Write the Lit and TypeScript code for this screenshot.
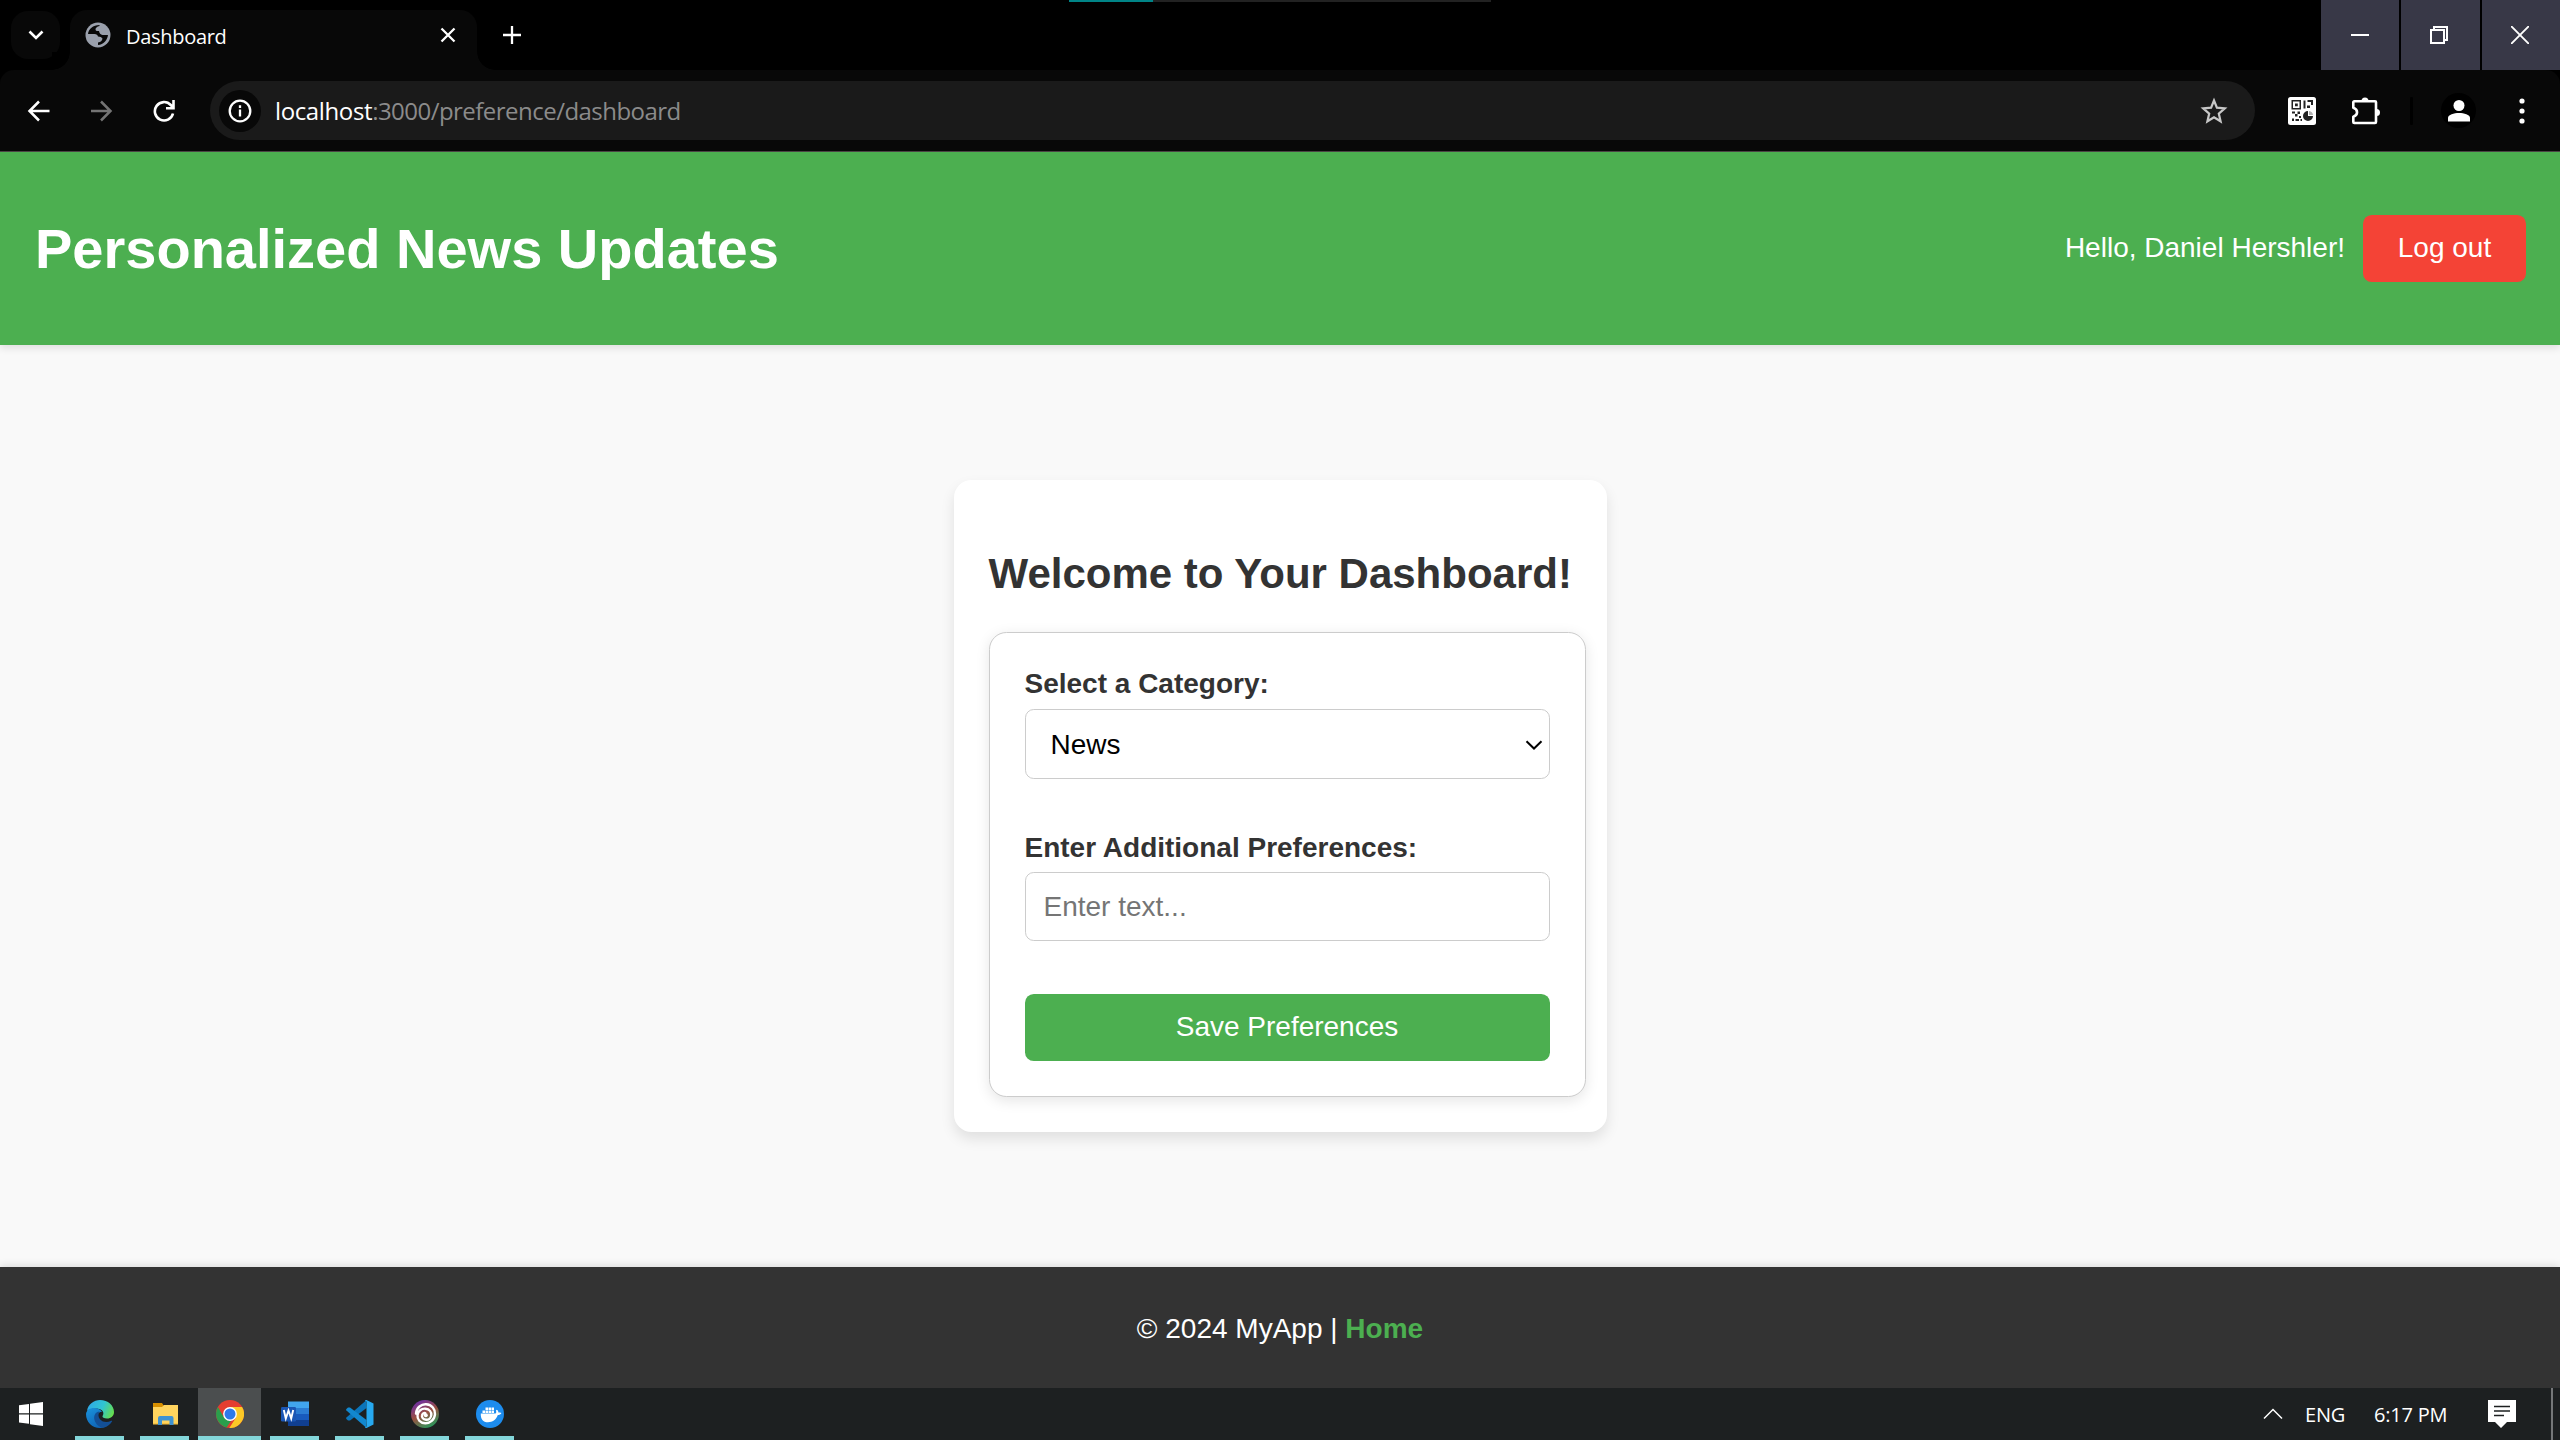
import { LitElement, html, css, svg } from "lit";
import { customElement } from "lit/decorators.js";

const edge = svg`<defs>
  <linearGradient id="e1" x1="0" y1="0.3" x2="1" y2="0.6"><stop offset="0" stop-color="#2fa8e8"/><stop offset=".55" stop-color="#30c5d2"/><stop offset="1" stop-color="#66dd4e"/></linearGradient>
  <linearGradient id="e2" x1="0" y1="0" x2="0.6" y2="1"><stop offset="0" stop-color="#1a93dc"/><stop offset="1" stop-color="#0f63b5"/></linearGradient></defs>
  <path fill="url(#e1)" d="M1 11C2 4 8 0 14 0c8 0 14 5.500 14 12 0 4-3 6.500-7 6.500-3 0-5-1-4.500-2.500C18 14 18 10 13 9 8 8 3 9 1 11z"/>
  <path fill="url(#e2)" d="M0 14C.5 10 4 8 8 8c4 0 7 2 8 4-3-.5-5 2-5 5 0 6 5 9 11 8-2 2-5 3-8 3C6 28 0 22 0 14z"/>
  <path fill="#134f96" d="M13.500 11.500C9 12 7.500 16 8.500 20c1 4 5 7.500 8.500 7.700 4-.7 7-3 9-6.200.4-.7-.2-1-.8-.7-4 2-8.500 1.500-11-1.300-2-2.300-2.300-5-.7-8z"/>`;

const folder = svg`
  <path fill="#d89000" d="M2 3h9l2 3h4v5H2z"/>
  <path fill="#ffd45e" d="M2 7h9l2-2h14v19H2z"/>
  <path fill="#f6c243" d="M2 23h25v1.500H2z"/>
  <path fill="#3f92d2" d="M7 25v-7q0-2 2-2h11.500q2 0 2 2v7h-4v-4.500H11V25z"/>`;

const chrome = svg`
  <circle cx="14" cy="14" r="14" fill="#e43d30"/>
  <path fill="#2a9e4c" d="M1.900 7 8 17.500 14 21l1 0-4.500 6.500A14 14 0 0 1 1.900 7z"/>
  <path fill="#fcc927" d="M14 7h12.100A14 14 0 0 1 13.300 28l6.800-10.500z"/>
  <circle cx="14" cy="14" r="6.900" fill="#fff"/><circle cx="14" cy="14" r="5.500" fill="#2e79ea"/>`;

const word = svg`
  <path fill="#41a5ee" d="M7 1.500h21V8H7z"/><path fill="#2b7cd3" d="M7 8h21v6H7z"/>
  <path fill="#185abd" d="M7 14h21v6H7z"/><path fill="#103f91" d="M7 20h21v6H7z"/>
  <rect x="0" y="7" width="15" height="14.500" rx="1.200" fill="#1b56b4"/>
  <path fill="none" stroke="#fff" stroke-width="1.900" d="m2.800 10 2 8.500 2.700-8 2.700 8 2-8.500"/>`;

const vscode = svg`
  <path fill="#0b75ba" d="M20 .5 20.500 8 4 20.500 2 20.500.4 19q-.6-.7 0-1.400z"/>
  <path fill="#1288cf" d="M20 27.500 20.500 20 4 7.500 2 7.500.4 9q-.6.7 0 1.400z"/>
  <path fill="#27a9f0" d="m20.500 0 7 3.500v21L20.500 28q-1 .2-1.500-.8l1.500-.7V1.500L19 .8q.5-1 1.500-.8z"/>`;

const swirl = svg`<defs><linearGradient id="u" x1=".2" y1="0" x2=".7" y2="1"><stop offset="0" stop-color="#6a2bb0"/><stop offset=".5" stop-color="#9a5040"/><stop offset="1" stop-color="#249a5c"/></linearGradient></defs>
  <circle cx="14" cy="14" r="14" fill="url(#u)"/>
  <g fill="none" stroke="#fff" stroke-linecap="round">
    <path stroke-width="2.400" d="M5 13.500C5.500 7.500 10.500 4 15 4.300c6 .4 9.300 5 9 10-.4 5.500-5 9.200-9.800 9-5-.2-8.200-4-7.700-8.300C7 11 10.500 8.300 14.500 8.700c4 .5 6 3.300 5.800 6.300-.3 3-2.500 5-5.300 4.800-2.800-.3-4.400-2.300-4-4.300.3-1.700 1.800-2.700 3.300-2.400"/>
  </g><circle cx="14.800" cy="15.300" r="2" fill="#fff"/>`;

const docker = svg`
  <circle cx="14" cy="14" r="14" fill="#1d8cee"/>
  <path fill="#fff" d="M4.800 13.500h14.500c1-.3 1.300-1.200.6-3l.9-.7c1.200.8 1.600 1.700 1.600 2.700 1 0 2.200.1 3 .6-.7 1.500-2 2-3.600 2C20 20 16.500 22.300 12 22.300c-5 0-7.500-3-7.200-8.800z"/>
  <path fill="#fff" d="M6.500 10.500H9V13H6.500zm3 0H12V13H9.500zm3 0H15V13h-2.500zm3 0H18V13h-2.500zM9.500 7.600H12v2.500H9.500zm3 0H15v2.500h-2.500zm3 0H18v2.500h-2.500z"/>`;

const apps = [
  { icon: edge, active: false },
  { icon: folder, active: false },
  { icon: chrome, active: true },
  { icon: word, active: false },
  { icon: vscode, active: false },
  { icon: swirl, active: false },
  { icon: docker, active: false },
];

@customElement("browser-chrome")
class BrowserChrome extends LitElement {
  static styles = css`
    :host { display: block; height: 152px; background: #000; color: #fff; font-family: "Open Sans", "Noto Sans", sans-serif; position: relative; }
    svg { display: block; flex: none; }
    .progress { position: absolute; left: 1069px; top: 0; width: 422px; height: 2px; background: #222; }
    .bar { width: 84px; height: 2px; background: #008487; }
    .tabs { height: 70px; display: flex; }
    .search { width: 49px; height: 48px; margin: 11px 10px 0 11px; border-radius: 17px; background: #080808; display: grid; place-items: center; }
    .tab { position: relative; width: 407px; height: 60px; margin-top: 10px; background: #080808; border-radius: 17px 17px 0 0; display: flex; align-items: center; box-sizing: border-box; padding: 0 21px 10px 15px; }
    .tab::before, .tab::after { content: ""; position: absolute; bottom: 0; width: 18px; height: 18px; }
    .tab::before { right: 100%; background: radial-gradient(circle at 0 0, #000 17.500px, #080808 18px); }
    .tab::after { left: 100%; background: radial-gradient(circle at 100% 0, #000 17.500px, #080808 18px); }
    .title { flex: 1; margin: 4px 0 0 15px; font-size: 20px; letter-spacing: -0.3px; line-height: 28px; }
    .plus { margin: 26px 0 0 26px; }
    .win { margin-left: auto; display: grid; grid-template-columns: 78px 79px 78px; gap: 2px; }
    .win span { background: #383847; display: flex; align-items: center; padding-left: 29px; }
    .win span:first-child { padding-left: 30px; }
    .tools { height: 81px; box-sizing: border-box; background: #080808; border-radius: 14px 14px 0 0; display: flex; align-items: center; padding-left: 26px; }
    .line { height: 1px; background: #4a4444; }
    .nav { display: flex; gap: 38px; width: 184px; }
    .omni { width: 2045px; height: 59px; border-radius: 30px; background: #1a1a1a; display: flex; align-items: center; box-sizing: border-box; padding: 0 27px 0 9px; }
    .info { width: 42px; height: 42px; border-radius: 50%; background: #080808; display: grid; place-items: center; }
    .url { flex: 1; margin-left: 14px; font-size: 24px; line-height: 34px; letter-spacing: -0.53px; color: #8b8b8b; }
    .url b { font-weight: 400; color: #fff; letter-spacing: -0.38px; }
    .qr { margin-left: 33px; }
    .puzzle { margin-left: 35px; }
    .sep { width: 3px; height: 28px; background: #000; margin-left: 29px; border-radius: 1px; }
    .user { width: 35px; height: 35px; border-radius: 50%; background: #000; margin-left: 28px; display: grid; place-items: center; }
    .dots { margin-left: 42px; }
  `;
  render() {
    return html`
      <div class="tabs">
        <div class="search"><svg width="16" height="10" fill="none" stroke="#fff" stroke-width="2.600"><path d="m1.500 1.500 6.500 6.500 6.500-6.500"/></svg></div>
        <div class="tab">
          <svg width="26" height="26" viewBox="0 0 26 26"><circle cx="13" cy="13" r="12.500" fill="#9aa0ac"/>
            <path fill="#080808" d="M3 12C3.500 7 8 3 14.500 3v1q-4 1-4 3.500 0 1.500 2 1.500H14q.5 3.500 3.500 4H23C22.500 18 18.500 22.500 13 23v-2.500q4-.5 4.500-4-1-2-4.500-2Q12.500 12 9.500 12z"/></svg>
          <span class="title">Dashboard</span>
          <svg width="16" height="16" stroke="#fff" stroke-width="2.300"><path d="m1.500 1.500 13 13m0-13-13 13"/></svg>
        </div>
        <svg class="plus" width="18" height="18" stroke="#fff" stroke-width="2.300"><path d="M9 0v18M0 9h18"/></svg>
        <div class="win">
          <span><svg width="18" height="18" stroke="#fff" stroke-width="2"><path d="M0 9h18"/></svg></span>
          <span><svg width="18" height="18" fill="none" stroke="#fff" stroke-width="2"><path d="M1 4h13v13H1zM4 4V1h13v13h-3"/></svg></span>
          <span><svg width="18" height="18" stroke="#fff" stroke-width="1.900"><path d="m0 0 18 18m0-18L0 18"/></svg></span>
        </div>
      </div>
      <div class="tools">
        <div class="nav">
          <svg width="25" height="22" fill="none" stroke="#fff" stroke-width="2.500"><path d="M23.500 11H4M13 1.500 3.500 11l9.500 9.500"/></svg>
          <svg width="25" height="22" fill="none" stroke="#747474" stroke-width="2.500"><path d="M2 11h19.500M12 1.500l9.500 9.500-9.500 9.500"/></svg>
          <svg width="25" height="22" fill="none" stroke="#fff" stroke-width="2.600"><path d="M21 13.500A9.200 9.200 0 1 1 18.800 5L21.500 8M14 8.300h7.500V0"/></svg>
        </div>
        <div class="omni">
          <span class="info"><svg width="24" height="24" fill="none" stroke="#fff" stroke-width="2.300"><circle cx="12" cy="12" r="10.300"/><path d="M12 10.500v7M12 6.300v2.600"/></svg></span>
          <span class="url"><b>localhost</b>:3000/preference/dashboard</span>
          <svg width="28" height="28" viewBox="0 0 28 28" fill="none" stroke="#c7c7c7" stroke-width="2.200"><path d="m14 3.500 2.900 7.200 7.900.7-6 5.200 1.800 7.700-6.600-4.100-6.600 4.100 1.800-7.700-6-5.200 7.900-.7z"/></svg>
        </div>
        <svg class="qr" width="28" height="28" viewBox="0 0 28 28"><rect width="28" height="28" rx="2.500" fill="#fff"/>
          <g fill="#222"><path d="M3.500 3h9.500v9.500H3.500zm1.500 1.500v6.500h6.500V4.500z" fill-rule="evenodd"/><path d="M7 6.500h2.800v2.800H7zM15.500 3.500h2v8h-2zM19.500 3H25v5h-2V5h-3.500zM19 8.500h3v2.500h-3zM4 14.500h3v2H4zM9.500 14.500H12v2.500H9.500zM7 17h2.500v2.500H7zM4 21.500h2V24H4zM7.500 22h3.500v2H7.500zM11 19h2v2h-2zM12.500 22H14v2h-1.500z"/><path d="M20 14v5h5a5 5 0 1 1-5-5z"/><path d="M21 14a4.500 4.500 0 0 1 4 4h-4z" opacity=".35"/></g></svg>
        <svg class="puzzle" width="30" height="30" viewBox="0 0 30 30" fill="none" stroke="#fff" stroke-width="2.600"><path stroke-linejoin="round" d="M2.300 6.300q0-1 1-1H24q1 0 1 1V26q0 1-1 1H3.300q-1 0-1-1v-5.200c5-1.500 5-7.500 0-9z"/><path fill="#fff" stroke="none" d="M10.500 5a3.500 3.500 0 0 1 7 0zM25.500 13a3.500 3.500 0 0 1 0 7z"/></svg>
        <span class="sep"></span>
        <span class="user"><svg width="22" height="22" fill="#fff"><circle cx="11" cy="5.500" r="5.500"/><path d="M0 21.500V18c0-3.500 6-5 11-5s11 1.500 11 5v3.500z"/></svg></span>
        <svg class="dots" width="8" height="28" fill="#fff"><circle cx="4" cy="4" r="2.600"/><circle cx="4" cy="14" r="2.600"/><circle cx="4" cy="24" r="2.600"/></svg>
      </div>
      <div class="line"></div>
      <div class="progress"><div class="bar"></div></div>
    `;
  }
}

@customElement("task-bar")
class TaskBar extends LitElement {
  static styles = css`
    :host { display: flex; height: 52px; background: #1d2021; color: #fff; font-family: "Open Sans", "Noto Sans", sans-serif; font-size: 20px; align-items: center; }
    svg { display: block; flex: none; }
    .start { margin: 0 25px 0 19px; }
    .apps { display: flex; gap: 2px; height: 52px; }
    .app { width: 63px; display: flex; flex-direction: column; align-items: center; justify-content: space-between; padding-top: 12px; box-sizing: border-box; }
    .app i { width: 49px; height: 4px; background: #83d6da; }
    .active { background: #4b4e4f; }
    .active i { width: 63px; }
    .up { margin-left: auto; }
    .lang { margin-left: 22px; width: 69px; letter-spacing: -0.2px; padding-top: 2px; }
    .time { width: 114px; letter-spacing: -0.2px; white-space: nowrap; padding-top: 2px; }
    .edge { width: 2px; height: 52px; background: #757779; margin: 0 7px 0 35px; }
  `;
  render() {
    return html`
      <svg class="start" width="24" height="24" viewBox="0 0 24 24" fill="#fff"><path d="M0 3.200 10 1.900v9.400H0zM11 1.700 24 0v11.300H11zM0 12.400h10v9.400L0 20.500zM11 12.400h13V24l-13-1.800z"/></svg>
      <div class="apps">
        ${apps.map((a) => html`<div class="app ${a.active ? "active" : ""}"><svg width="28" height="28" viewBox="0 0 28 28">${a.icon}</svg><i></i></div>`)}
      </div>
      <svg class="up" width="20" height="12" fill="none" stroke="#fff" stroke-width="1.500"><path d="m1 10.500 9-9 9 9"/></svg>
      <span class="lang">ENG</span>
      <span class="time">6:17 PM</span>
      <svg width="28" height="28" viewBox="0 0 28 28"><path fill="#fff" d="M0 0h28v22H19l-6 6-6-6H0z"/><path stroke="#1d2021" stroke-width="1.600" d="M6 6.500h16M6 11h16M6 15.500h10"/></svg>
      <span class="edge"></span>
    `;
  }
}

@customElement("app-root")
class AppRoot extends LitElement {
  static styles = css`
    :host { display: flex; flex-direction: column; width: 2560px; height: 1440px; overflow: hidden; background: #f9f9f9; color: #333; font-family: "Liberation Sans", Arial, sans-serif; font-size: 28px; line-height: 32px; }
    .header { height: 193px; box-sizing: border-box; padding: 0 34px 0 35px; background: #4caf50; color: #fff; display: flex; align-items: center; box-shadow: 0 3.500px 7px rgba(0, 0, 0, 0.1); }
    h1 { margin: 0 auto 0 0; font-size: 56px; line-height: 64px; }
    .hello { padding-bottom: 2px; }
    .logout { font: inherit; color: #fff; background: #f44336; border: 0; border-radius: 8.750px; width: 163px; height: 67px; margin-left: 18px; padding: 0 0 2px; }
    .main { flex: 1; display: flex; justify-content: center; align-items: center; }
    .card { width: 653px; height: 652px; box-sizing: border-box; padding: 70px 35px 0; border-radius: 17.500px; background: #fff; box-shadow: 0 7px 14px rgba(0, 0, 0, 0.1); }
    h2 { margin: 0 0 34px; font-size: 42px; line-height: 48px; white-space: nowrap; }
    .form { width: 597px; height: 465px; box-sizing: border-box; border: 1px solid #ccc; border-radius: 17.500px; padding: 35px; background: #fff; box-shadow: 0 3.500px 14px rgba(0, 0, 0, 0.1); display: flex; flex-direction: column; }
    label { font-weight: 700; }
    .field { box-sizing: border-box; width: 525px; border: 1px solid #ccc; border-radius: 8.750px; background: #fff; display: flex; align-items: center; justify-content: space-between; }
    .select { height: 70px; margin: 9px 0 53px; padding: 2px 6px 0 25px; color: #000; }
    .input { height: 69px; margin: 8px 0 53px; padding: 0 18px; color: #757575; }
    .save { font: inherit; height: 67px; border: 0; border-radius: 8.750px; background: #4caf50; color: #fff; padding: 0 0 2px; }
    .footer { height: 121px; box-sizing: border-box; padding-top: 2px; background: #333; color: #fff; display: flex; align-items: center; justify-content: center; box-shadow: 0 -3.500px 7px rgba(0, 0, 0, 0.1); white-space: pre; }
    .footer a { color: #4caf50; font-weight: 700; }
  `;
  render() {
    return html`
      <browser-chrome></browser-chrome>
      <header class="header"><h1>Personalized News Updates</h1><span class="hello">Hello, Daniel Hershler!</span><button class="logout">Log out</button></header>
      <main class="main">
        <section class="card">
          <h2>Welcome to Your Dashboard!</h2>
          <div class="form">
            <label>Select a Category:</label>
            <div class="field select">News<svg width="18" height="10" fill="none" stroke="#000" stroke-width="2"><path d="m1.500 1.200 7.500 7.300 7.500-7.300"/></svg></div>
            <label>Enter Additional Preferences:</label>
            <div class="field input">Enter text...</div>
            <button class="save">Save Preferences</button>
          </div>
        </section>
      </main>
      <footer class="footer"><span>© 2024 MyApp | <a>Home</a></span></footer>
      <task-bar></task-bar>
    `;
  }
}
